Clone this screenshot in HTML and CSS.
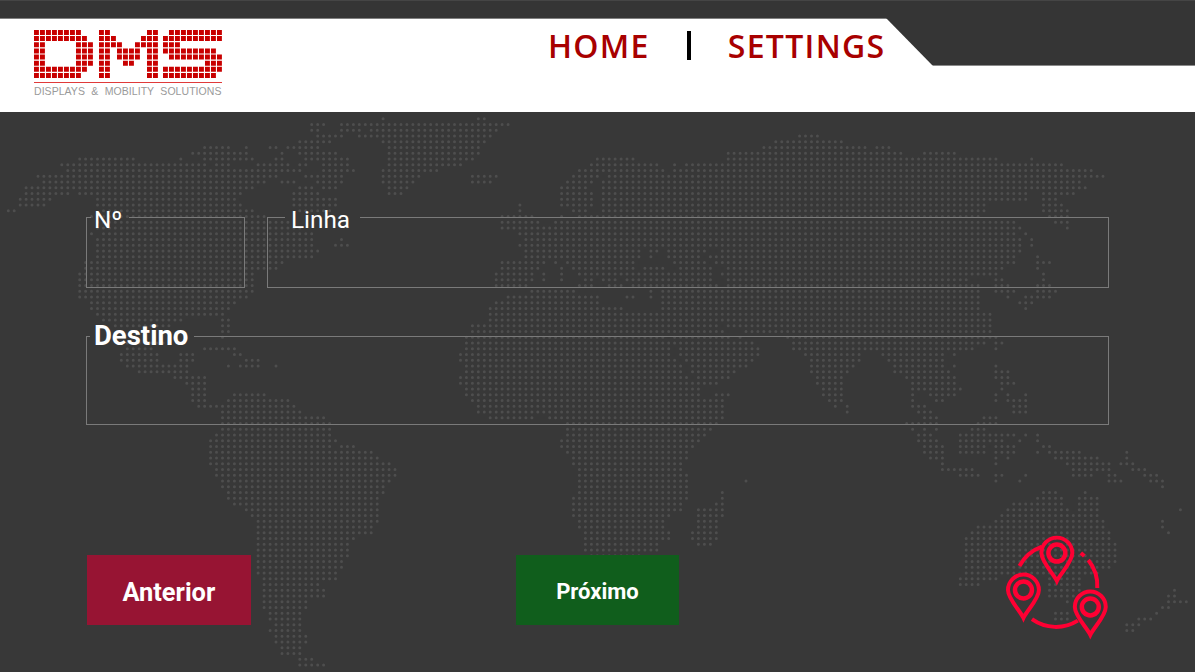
FILE: index.html
```html
<!DOCTYPE html>
<html lang="pt">
<head>
    <meta charset="UTF-8" />
    <title>DMS</title>
    <link rel="stylesheet" href="styles.css">
</head>
<body>

<div class="topbar"></div>

<header class="header">
    <div class="logo">
        <svg class="logo-mark" width="188" height="48" viewBox="0 0 188 48">
            <g class="logo-cells">
                <path d="M0 2.5h48M65 2.5h12M113 2.5h12M135 2.5h54"/>
                <path d="M0 8.6h54M65 8.6h18M107 8.6h18M129 8.6h60"/>
                <path d="M0 14.8h12M42 14.8h18M65 14.8h24M101 14.8h24M129 14.8h18"/>
                <path d="M0 20.9h12M42 20.9h18M65 20.9h12M83 20.9h24M113 20.9h12M129 20.9h54"/>
                <path d="M0 27h12M42 27h18M65 27h12M83 27h24M113 27h12M135 27h54"/>
                <path d="M0 33.2h12M42 33.2h18M65 33.2h12M89 33.2h12M113 33.2h12M171 33.2h18"/>
                <path d="M0 39.3h54M65 39.3h12M113 39.3h12M129 39.3h60"/>
                <path d="M0 45.5h48M65 45.5h12M113 45.5h12M129 45.5h54"/>
            </g>
        </svg>
        <div class="logo-line"></div>
        <div class="logo-text">DISPLAYS &amp; MOBILITY SOLUTIONS</div>
    </div>
    <nav class="nav">
        <a class="nav-link">HOME</a>
        <span class="nav-sep"></span>
        <a class="nav-link">SETTINGS</a>
    </nav>
    <div class="notch"></div>
</header>

<main class="content">
    <svg class="map" id="map" width="1195" height="560" viewBox="0 112 1195 560"></svg>

    <div class="fields">
        <fieldset class="box box-num">
            <legend class="legend-num">Nº</legend>
        </fieldset>
        <fieldset class="box box-line">
            <legend class="legend-line">Linha</legend>
        </fieldset>
    </div>
    <fieldset class="box box-dest">
        <legend class="legend-dest">Destino</legend>
    </fieldset>

    <div class="actions">
        <button class="btn btn-prev">Anterior</button>
        <button class="btn btn-next">Próximo</button>
        <svg class="route-icon" width="105" height="110" viewBox="1005 535 105 110">
            <defs>
                <g id="pin">
                    <path d="M0 28C-3.5 20.5-15.5 9-15.5 0A15.5 15.5 0 0 1 15.5 0C15.5 9 3.5 20.5 0 28Z"/>
                    <circle r="8.5" class="pin-ring"/>
                </g>
            </defs>
            <path d="M1020.5 566A41.5 41.5 0 0 1 1043 546.5"/>
            <path d="M1033 619.3A41.5 41.5 0 0 0 1079 620.7"/>
            <path d="M1098.5 588A41.5 41.5 0 0 0 1089.5 560"/>
            <path d="M1082 553L1085.5 556"/>
            <use href="#pin" x="1058" y="553"/>
            <use href="#pin" x="1024.5" y="590"/>
            <use href="#pin" x="1091.5" y="607"/>
        </svg>
    </div>
</main>

<script src="map.js"></script>
</body>
</html>
```

FILE: styles.css
```css
* {
    box-sizing: border-box;
}

body {
    margin: 0;
    height: 672px;
    overflow: hidden;
    font-family: 'Roboto', 'Liberation Sans', sans-serif;
    background-color: #383838;
    color: white;
}

.topbar {
    height: 18px;
    background-color: #353535;
    border-top: 1px solid #454545;
}

.header {
    position: relative;
    display: flex;
    height: 94px;
    padding: 11px 0 0 34px;
    background: white;
    border-top: 1px solid #808080;
}

.logo {
    width: 188px;
}

.logo-mark {
    display: block;
}

.logo-cells path {
    fill: none;
    stroke: #c80000;
    stroke-width: 5px;
    stroke-dasharray: 4.9 1.1;
}

.logo-line {
    height: 1px;
    margin-top: 4px;
    background-color: #e03a3a;
}

.logo-text {
    margin-top: 2px;
    font-family: 'Liberation Sans', Arial, sans-serif;
    font-size: 10.5px;
    line-height: 13px;
    letter-spacing: 0.05px;
    word-spacing: 3.4px;
    white-space: nowrap;
    color: #9a9a9a;
}

.nav {
    display: flex;
    align-items: center;
    height: 31px;
    margin: 0 0 0 326px;
    font-family: 'Open Sans', 'Liberation Sans', sans-serif;
    font-size: 32px;
    font-weight: 600;
    letter-spacing: 1.3px;
    white-space: nowrap;
}

.nav-link {
    color: #a80000;
}

.nav-sep {
    width: 4px;
    height: 29px;
    margin: 0 37px;
    background-color: black;
}

.notch {
    position: absolute;
    top: -1px;
    right: 0;
    width: 309px;
    height: 48px;
    background: linear-gradient(#353535 47px, #8a8a8a 47px);
    clip-path: polygon(0 0, 100% 0, 100% 100%, 47px 100%);
}

.content {
    position: relative;
    height: 560px;
    padding: 88px 86px 0 86px;
}

.map {
    position: absolute;
    top: 0;
    left: 0;
}

.map path {
    fill: none;
    stroke: #4e4e4e;
    stroke-width: 3px;
    stroke-linecap: round;
}

.fields {
    position: relative;
    display: flex;
    gap: 22px;
}

.box {
    position: relative;
    min-width: 0;
    margin: 0;
    padding: 0;
    border: 1px solid #7a7a7a;
}

.box-num {
    flex: 0 0 159px;
    height: 88px;
}

.box-line {
    flex: 1;
    height: 88px;
}

.box-dest {
    height: 103px;
    margin-top: 34px;
}

legend {
    padding-top: 6px;
    font-size: 24.3px;
    line-height: 28px;
}

.legend-num {
    margin-left: 4px;
    padding-right: 7px;
    padding-left: 3px;
}

.legend-line {
    margin-left: 17px;
    padding-right: 10px;
    padding-left: 6px;
}

.legend-dest {
    margin-left: 3px;
    padding-top: 0;
    padding-right: 6px;
    padding-left: 4px;
    font-size: 27.5px;
    font-weight: 700;
}

.actions {
    position: relative;
    display: flex;
    align-items: center;
    margin: 110px 0 0 1px;
}

.btn {
    height: 70px;
    padding: 3px 0 0;
    border: none;
    color: white;
    font-family: inherit;
    font-weight: 700;
}

.btn-prev {
    width: 164px;
    background-color: #971433;
    font-size: 25.4px;
}

.btn-next {
    width: 164px;
    margin-left: 265px;
    background-color: #105e1c;
    font-size: 22px;
}

.route-icon {
    margin-left: 325px;
    fill: none;
    stroke: #ff0033;
    stroke-width: 4px;
}

.pin-ring {
    stroke-width: 4.5px;
}
```

FILE: map.js
```js
// dotted world map, one list of x ranges per row of dots
const rows = [
    [386,386,476,482],
    [314,321,339,383,390,507],
    [314,318,339,358,373,496],
    [316,339,362,490,801,816],
    [302,329,385,483,776,839],
    [207,228,249,249,268,274,285,293,302,316,390,476,765,864,879,886],
    [195,245,279,279,297,335,390,476,731,739,748,900,926,953],
    [82,132,178,178,207,251,274,279,308,346,390,471,600,632,731,995,1029,1029],
    [59,207,218,226,260,287,297,304,325,346,390,459,589,656,672,672,689,1059],
    [65,298,325,352,385,434,582,661,672,1090],
    [40,275,308,340,385,417,475,494,574,600,611,642,653,1080,1088,1101],
    [46,264,279,293,320,340,385,411,475,488,570,590,606,1078],
    [29,251,302,312,325,335,390,406,559,586,606,1084],
    [29,67,82,239,291,316,390,400,559,590,606,1025,1046,1072],
    [23,48,100,233,291,335,559,590,606,1006,1016,1023,1046,1053],
    [23,42,100,239,291,335,522,522,564,590,606,983,1046,1059],
    [11,17,105,251,297,329,522,522,576,585,606,983,1046,1065],
    [94,264,505,530,564,564,582,981,1052,1065],
    [100,287,505,513,522,536,557,1012,1058,1065],
    [100,298,505,513,522,536,545,1012,1017,1017,1065,1065],
    [94,94,105,310,517,524,528,1012,1023,1023],
    [100,310,339,339,528,1017,1029,1029],
    [100,312,333,346,522,1017,1029,1029],
    [100,318,528,638,649,655,670,702,725,1017],
    [100,312,528,638,653,653,670,697,712,1012,1035,1035],
    [88,281,505,541,553,553,570,584,593,632,676,702,718,1012,1035,1048],
    [88,275,505,536,564,564,576,632,647,661,683,708,731,1000,1035,1035],
    [82,255,499,530,541,541,564,564,582,619,628,708,725,725,731,995,1046,1046],
    [82,255,499,530,541,541,564,564,585,590,606,613,628,708,731,964,993,1000,1046,1046],
    [82,251,499,524,582,590,611,619,634,714,731,981,998,1006,1040,1048],
    [82,251,534,572,653,653,665,978,998,1012,1035,1053],
    [82,245,511,600,625,632,653,653,665,978,1005,1005,1023,1048],
    [94,233,497,600,665,981,1021,1029],
    [94,228,492,619,665,981,1023,1023],
    [100,222,492,714,720,989],
    [105,180,220,228,492,657,665,714,725,989],
    [115,170,220,228,474,657,665,714,731,989],
    [220,228,474,663,670,721,748,989],
    [220,220,469,663,676,727,742,742,790,989,998,998],
    [125,160,469,668,676,750,795,983,993,1000],
    [126,151,207,233,469,668,682,756,795,970,993,993],
    [122,155,178,191,232,239,461,668,682,756,803,803,812,862,885,940,957,957],
    [122,155,178,191,249,256,463,674,689,750,814,858,890,940],
    [130,186,226,226,243,256,274,274,467,680,695,744,814,852,896,940,957,957,998,998],
    [142,186,467,680,695,733,814,847,896,947,998,1006],
    [172,203,461,685,701,727,820,839,909,953,998,1006],
    [188,203,463,691,701,714,820,839,915,953,1004,1012],
    [191,203,469,697,826,839,915,959,1004,1004],
    [195,203,237,245,255,262,469,697,718,727,826,839,915,915,932,953,998,998,1010,1010,1023,1023],
    [195,203,230,285,475,721,831,839,915,915,938,945,993,993,1010,1023],
    [201,293,480,721,833,833,845,845,915,923,1016,1023],
    [224,298,480,721,845,850,921,928,1016,1023],
    [224,321,492,530,551,721,926,934,987,993],
    [224,327,570,714,909,917,926,934,980,993],
    [224,327,570,708,915,915,923,923,934,934,974,987],
    [218,327,570,702,921,928,962,993,1004,1012,1023,1023,1035,1035],
    [212,333,562,697,921,934,962,993,1004,1004,1017,1017,1035,1035],
    [212,327,339,352,562,691,926,940,962,987,998,1012,1046,1052],
    [212,369,570,685,926,945,962,987,998,1012,1035,1035,1052,1059,1070,1082,1124,1124],
    [212,375,576,685,932,945,998,998,1010,1010,1057,1095,1129,1129],
    [212,388,576,680,940,945,998,998,1069,1107,1118,1124,1135,1135],
    [218,394,582,680,945,970,1074,1107,1135,1143],
    [218,394,582,685,962,981,993,993,1004,1004,1023,1023,1074,1093,1110,1114,1146,1154],
    [224,388,582,685,748,748,998,998,1017,1017,1110,1118,1152,1160],
    [224,381,582,685,1160,1160],
    [230,381,582,685,720,720,1046,1057,1088,1088],
    [230,375,576,685,720,725,1040,1059,1082,1095],
    [237,375,576,680,714,725,1016,1059,1082,1095],
    [249,375,576,680,700,720,1010,1065,1082,1095,1182,1182],
    [254,375,576,668,700,720,1004,1095],
    [260,375,582,662,700,714,998,1101,1165,1165],
    [260,369,582,662,700,714,980,1101,1165,1165],
    [260,369,587,668,695,714,974,1107,1171,1171],
    [260,352,587,668,695,714,968,1107],
    [260,346,587,657,700,708,968,1112],
    [260,346,587,657,968,1112],
    [260,346,592,640,968,1112],
    [260,340,968,1112],
    [260,340,968,1107],
    [260,335,968,1095],
    [266,335,962,995,1052,1082],
    [266,316,962,978,1052,1082],
    [266,321,1052,1082,1177,1177],
    [266,321,1052,1076,1171,1177],
    [266,304,1065,1065,1171,1184],
    [266,304,1165,1171],
    [272,298,1057,1065,1154,1154],
    [272,298,1057,1065,1141,1148],
    [277,298,1129,1141],
    [272,298,1124,1135],
    [277,304],
    [277,304],
    [283,298],
    [283,298],
    [302,310],
    [302,321]
];

const stepX = 5.95;
const stepY = 5.75;
const originX = 2.3;
const originY = 118.7;

let d = '';
rows.forEach((runs, r) => {
    const y = originY + r * stepY;
    for (let i = 0; i < runs.length; i += 2) {
        const first = Math.round((runs[i] - originX) / stepX);
        const last = Math.round((runs[i + 1] - originX) / stepX);
        for (let c = first; c <= last; c++) {
            d += 'M' + (originX + c * stepX).toFixed(1) + ' ' + y.toFixed(1) + 'h0';
        }
    }
});

const path = document.createElementNS('http://www.w3.org/2000/svg', 'path');
path.setAttribute('d', d);
document.getElementById('map').appendChild(path);
```
